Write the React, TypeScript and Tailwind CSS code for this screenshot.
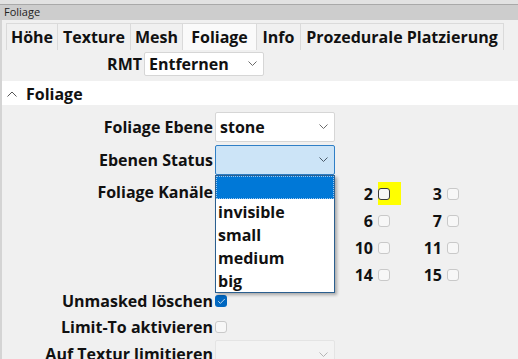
import { Check } from 'lucide-react';

const tabs = ['Höhe', 'Texture', 'Mesh', 'Foliage', 'Info', 'Prozedurale Platzierung'];
const tabWidths = ['w-[52px]', 'w-[73px]', 'w-[52px]', 'w-[74px]', 'w-[44px]', 'w-[203px]'];
// channels hidden behind the open list
const covered = [0, 1, 4, 5, 8, 9, 12, 13];

function Chevron({ color = '#6b6b6b' }: { color?: string }) {
  return (
    <svg width="9" height="5" viewBox="0 0 9 5" className="shrink-0">
      <path d="M0.5 0.5 L4.5 4.5 L8.5 0.5" fill="none" stroke={color} strokeWidth="1" />
    </svg>
  );
}

function Box({ checked = false, hover = false }: { checked?: boolean; hover?: boolean }) {
  if (checked) {
    return (
      <span className="flex h-[12px] w-[12px] items-center justify-center rounded-[3px] bg-[#0067c0]">
        <Check size={9} color="#ffffff" strokeWidth={2} />
      </span>
    );
  }
  return (
    <span
      className={`block h-[12px] w-[12px] rounded-[3px] border bg-[#f7f7f7] ${
        hover ? 'border-[#3b3b3b]' : 'border-[#c9c9c9]'
      }`}
    />
  );
}

function Label({ children }: { children: React.ReactNode }) {
  return <span className="block w-[213px] pr-[2px] text-right">{children}</span>;
}

export default function App() {
  const channels = Array.from({ length: 16 }, (_, i) => i);

  return (
    <div
      className="relative h-[359px] w-[518px] overflow-hidden bg-[#f0f0f0] text-[16px] font-bold text-[#111]"
      style={{ fontFamily: '"Open Sans", "Noto Sans", sans-serif' }}
    >
      {/* title bar */}
      <div className="h-[4px] bg-[#e2e2e2]" />
      <div className="flex h-[16px] items-center border-t border-[#a9a9a9] bg-[#cdcdcd] pl-[4px] text-[11px] font-normal text-[#222]">
        Foliage
      </div>

      <div className="h-[339px] border-l-2 border-[#d4d4d4]">
        {/* tabs */}
        <div className="flex h-[30px] items-end pl-[4px]">
          {tabs.map((t, i) => (
            <div
              key={t}
              className={`flex h-[27px] items-center justify-center border-r border-t border-[#dadada] pb-[1px] ${tabWidths[i]} ${
                t === 'Foliage' ? 'bg-[#fafafa]' : 'bg-[#f0f0f0]'
              } ${i === 0 ? 'border-l' : ''}`}
            >
              {t}
            </div>
          ))}
        </div>

        {/* RMT */}
        <div className="flex h-[27px] items-center">
          <span className="block w-[142px] pr-[2px] text-right">RMT</span>
          <div className="flex h-[24px] w-[120px] items-center justify-between rounded-[2px] border border-[#d6d6d6] bg-white pl-[4px] pr-[6px]">
            <span>Entfernen</span>
            <Chevron />
          </div>
        </div>

        {/* section header */}
        <div className="mt-[4px] flex h-[24px] items-center bg-white pl-[5px] pt-[2px] text-[16px]">
          <svg width="10" height="6" viewBox="0 0 10 6" className="mr-[9px]">
            <path d="M0.5 5.5 L5 1 L9.5 5.5" fill="none" stroke="#555" strokeWidth="1" />
          </svg>
          Foliage
        </div>

        {/* form */}
        <div className="relative pt-[6px]">
          <div className="flex h-[31px] items-center">
            <Label>Foliage Ebene</Label>
            <div className="flex h-[30px] w-[120px] items-center justify-between rounded-[2px] border border-[#d6d6d6] bg-white pl-[4px] pr-[6px]">
              <span>stone</span>
              <Chevron />
            </div>
          </div>

          <div className="mt-[2px] flex h-[31px] items-center">
            <Label>Ebenen Status</Label>
            <div className="flex h-[30px] w-[120px] items-center justify-end rounded-[2px] border border-[#2f7fc6] bg-[#cce4f7] pr-[6px]">
              <Chevron color="#4b5a68" />
            </div>
          </div>

          <div className="flex pt-[2px]">
            <div className="flex h-[30px] items-center">
              <Label>Foliage Kanäle</Label>
            </div>
            <div className="grid grid-cols-[38px_69px_69px_69px] pt-[3px]">
              {channels.map((n) => (
                <div
                  key={n}
                  className={`flex h-[27px] items-center justify-end ${covered.includes(n) ? 'invisible' : ''}`}
                >
                  <span className="mr-[5px]">{n}</span>
                  {n === 2 ? (
                    <span className="-mr-[10px] flex h-[23px] w-[23px] items-center bg-[#ffff00]">
                      <Box hover />
                    </span>
                  ) : (
                    <span className="mr-[1px]">
                      <Box />
                    </span>
                  )}
                </div>
              ))}
            </div>
          </div>

          <div className="flex h-[26px] items-center">
            <Label>Unmasked löschen</Label>
            <Box checked />
          </div>
          <div className="flex h-[26px] items-center">
            <Label>Limit-To aktivieren</Label>
            <Box />
          </div>
          <div className="flex h-[28px] items-center">
            <Label>Auf Textur limitieren</Label>
            <div className="flex h-[28px] w-[120px] items-center justify-end rounded-[2px] border border-[#e4e4e4] bg-[#f3f3f3] pr-[6px]">
              <Chevron color="#b5b5b5" />
            </div>
          </div>

          {/* open dropdown list */}
          <div className="absolute left-[213px] top-[70px] z-10 w-[120px] border border-[#2b5f8f] bg-white shadow-[2px_2px_3px_rgba(0,0,0,0.3)]">
            <div className="h-[23px] border border-dotted border-[#9cc6ee] bg-[#0078d7]" />
            {['invisible', 'small', 'medium', 'big'].map((o) => (
              <div key={o} className="flex h-[23px] items-center pl-[2px] pt-[2px]">
                {o}
              </div>
            ))}
            <div className="h-[1px]" />
          </div>
        </div>
      </div>
    </div>
  );
}
